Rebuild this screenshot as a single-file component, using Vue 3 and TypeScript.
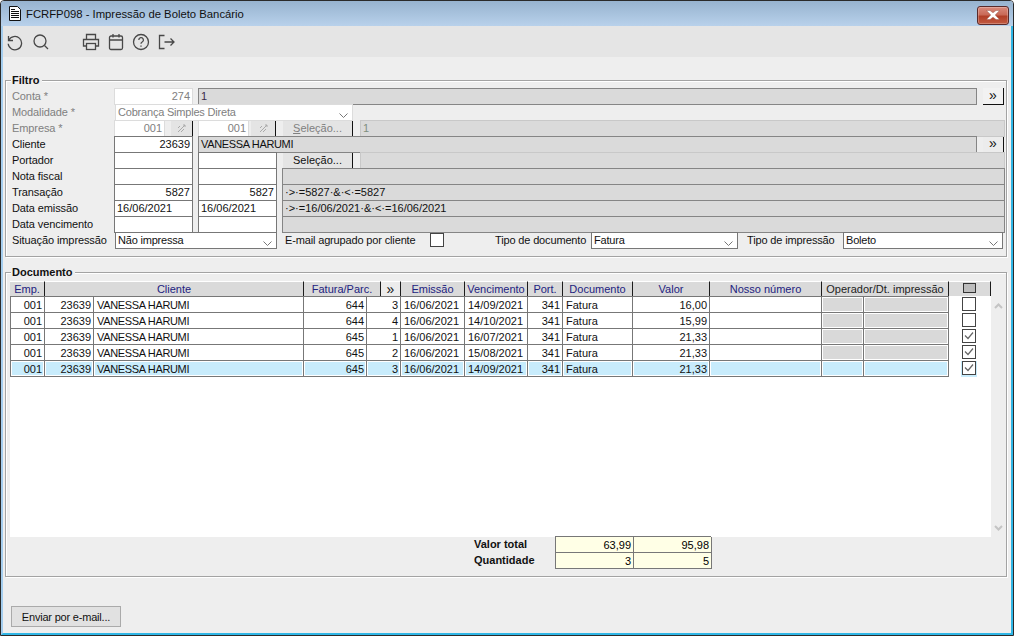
<script setup lang="ts">
interface Row {
  fat: string
  parc: string
  venc: string
  valor: string
  checked: boolean
  selected?: boolean
}

const rows: Row[] = [
  { fat: '644', parc: '3', venc: '14/09/2021', valor: '16,00', checked: false },
  { fat: '644', parc: '4', venc: '14/10/2021', valor: '15,99', checked: false },
  { fat: '645', parc: '1', venc: '16/07/2021', valor: '21,33', checked: true },
  { fat: '645', parc: '2', venc: '15/08/2021', valor: '21,33', checked: true },
  { fat: '645', parc: '3', venc: '14/09/2021', valor: '21,33', checked: true, selected: true },
]
</script>

<template>
  <div class="window">
    <header class="title">
      <svg class="title-icon" width="12" height="15" viewBox="0 0 12 15">
        <path d="M.5 .5h8l3 3v11h-11z" fill="#fff" stroke="#111" />
        <path d="M2 3.500h4M2 5.500h8M2 7.500h8M2 9.500h8M2 11.500h8" stroke="#111" stroke-width="1.200" />
      </svg>
      <span class="title-text">FCRFP098 - Impressão de Boleto Bancário</span>
      <button class="close" type="button" aria-label="Fechar">
        <svg width="14" height="10" viewBox="0 0 14 10">
          <path d="M.5 .5h3.500l3 2.300 3-2.300h3.500l-4.300 4.500 4.300 4.500h-3.500l-3-2.300-3 2.300h-3.500l4.300-4.500z" fill="#fff" stroke="#8a4a40" stroke-width=".4" />
        </svg>
      </button>
    </header>

    <div class="content">
      <nav class="toolbar">
        <svg class="tool" viewBox="0 0 18 18"><path d="M2.500 3v4.500h4.500M2.800 7.300a6.700 6.700 0 1 1-.6 3.500" /></svg>
        <svg class="tool" viewBox="0 0 18 18"><circle cx="8" cy="8" r="6" /><path d="M12.500 12.500l3.500 3.500" /></svg>
        <div class="tool-gap"></div>
        <svg class="tool" viewBox="0 0 18 18"><path d="M4.500 6V1.500h9V6M4.500 13H1.500V6.500h15V13h-3" /><rect x="4.500" y="10.500" width="9" height="6" /></svg>
        <svg class="tool" viewBox="0 0 18 18"><rect x="2.500" y="3" width="13" height="13.500" rx="1.500" /><path d="M2.500 7h13M6 1v3.500M12 1v3.500" /></svg>
        <svg class="tool" viewBox="0 0 18 18"><circle cx="9" cy="9" r="7.500" /><path d="M6.800 7a2.300 2.300 0 1 1 3.400 2c-.8.500-1.200.9-1.200 1.800" /><path d="M9 12.600v1.200" /></svg>
        <svg class="tool tool-last" viewBox="0 0 18 18"><path d="M6.500 2.500H1.500v13H6.500M6.500 9h9.500M12.500 5.500l3.500 3.500-3.500 3.500" /></svg>
      </nav>

      <main class="body">
        <section class="group filtro">
          <h2 class="legend">Filtro</h2>

          <div class="frow">
            <label class="lbl off">Conta *</label>
            <div class="f w79 r soft">274</div>
            <div class="f desc grow ml5">1</div>
            <button class="more" type="button">»</button>
          </div>
          <div class="frow">
            <label class="lbl off">Modalidade *</label>
            <div class="f sel soft modal">
              <span>Cobrança Simples Direta</span>
              <svg class="chev" width="9" height="5" viewBox="0 0 9 5"><path d="M.5.500l4 4 4-4" /></svg>
            </div>
          </div>
          <div class="frow">
            <label class="lbl off">Empresa *</label>
            <div class="f w51 r soft">001</div>
            <button class="lookup" type="button">
              <svg width="9" height="9" viewBox="0 0 9 9"><path d="M1 8l7-7M6 1h2M8 1v2M1 4l2-2M4 8l3-3" stroke="#aaa" fill="none" /></svg>
            </button>
            <div class="f w51 r soft ml5">001</div>
            <button class="lookup small" type="button">
              <svg width="9" height="9" viewBox="0 0 9 9"><path d="M1 8l7-7M6 1h2M8 1v2M1 4l2-2M4 8l3-3" stroke="#aaa" fill="none" /></svg>
            </button>
            <button class="sel-btn off ml7" type="button"><u>S</u>eleção...</button>
            <div class="f desc light grow ml7">1</div>
          </div>
          <div class="frow">
            <label class="lbl">Cliente</label>
            <div class="f w79 r">23639</div>
            <div class="f desc grow ml5 dark name">VANESSA HARUMI</div>
            <button class="more bare" type="button">»</button>
          </div>
          <div class="frow">
            <label class="lbl">Portador</label>
            <div class="f w79"></div>
            <div class="f w79 ml5"></div>
            <button class="sel-btn ml6" type="button">Seleção...</button>
            <div class="f desc light grow ml7"></div>
          </div>
          <div class="frow">
            <label class="lbl">Nota fiscal</label>
            <div class="f w79"></div>
            <div class="f w79 ml5"></div>
            <div class="f desc grow ml5"></div>
          </div>
          <div class="frow">
            <label class="lbl">Transação</label>
            <div class="f w79 r">5827</div>
            <div class="f w79 r ml5">5827</div>
            <div class="f desc grow ml5 dark">·&gt;·=5827·&amp;·&lt;·=5827</div>
          </div>
          <div class="frow">
            <label class="lbl">Data emissão</label>
            <div class="f w79">16/06/2021</div>
            <div class="f w79 ml5">16/06/2021</div>
            <div class="f desc grow ml5 dark">·&gt;·=16/06/2021·&amp;·&lt;·=16/06/2021</div>
          </div>
          <div class="frow">
            <label class="lbl">Data vencimento</label>
            <div class="f w79"></div>
            <div class="f w79 ml5"></div>
            <div class="f desc grow ml5"></div>
          </div>
          <div class="frow">
            <label class="lbl">Situação impressão</label>
            <div class="f sel situacao">
              <span>Não impressa</span>
              <svg class="chev" width="9" height="5" viewBox="0 0 9 5"><path d="M.5.500l4 4 4-4" /></svg>
            </div>
            <span class="inline email">E-mail agrupado por cliente</span>
            <span class="box email-box"></span>
            <span class="inline tipo-doc">Tipo de documento</span>
            <div class="f sel w147">
              <span>Fatura</span>
              <svg class="chev" width="9" height="5" viewBox="0 0 9 5"><path d="M.5.500l4 4 4-4" /></svg>
            </div>
            <span class="inline tipo-imp">Tipo de impressão</span>
            <div class="f sel w160">
              <span>Boleto</span>
              <svg class="chev" width="9" height="5" viewBox="0 0 9 5"><path d="M.5.500l4 4 4-4" /></svg>
            </div>
          </div>
        </section>

        <section class="group documento">
          <h2 class="legend">Documento</h2>

          <div class="grid-wrap">
            <div class="grid">
              <div class="thead">
                <span class="th" style="width: 35px">Emp.</span>
                <span class="th" style="width: 259px">Cliente</span>
                <span class="th" style="width: 77px">Fatura/Parc.</span>
                <span class="th more-th" style="width: 20px">»</span>
                <span class="th" style="width: 64px">Emissão</span>
                <span class="th" style="width: 63px">Vencimento</span>
                <span class="th" style="width: 35px">Port.</span>
                <span class="th" style="width: 70px">Documento</span>
                <span class="th" style="width: 77px">Valor</span>
                <span class="th" style="width: 112px">Nosso número</span>
                <span class="th op" style="width: 127px">Operador/Dt. impressão</span>
                <span class="th" style="width: 42px"><i class="all-box"></i></span>
              </div>
              <div v-for="(row, i) in rows" :key="i" class="tr" :class="{ selected: row.selected }">
                <div class="cells">
                  <span class="td r" style="width: 34px">001</span>
                  <span class="td r" style="width: 49px">23639</span>
                  <span class="td name" style="width: 210px">VANESSA HARUMI</span>
                  <span class="td r" style="width: 63px">{{ row.fat }}</span>
                  <span class="td r" style="width: 34px">{{ row.parc }}</span>
                  <span class="td" style="width: 64px">16/06/2021</span>
                  <span class="td" style="width: 63px">{{ row.venc }}</span>
                  <span class="td r" style="width: 35px">341</span>
                  <span class="td" style="width: 70px">Fatura</span>
                  <span class="td r" style="width: 77px">{{ row.valor }}</span>
                  <span class="td" style="width: 112px"></span>
                  <span class="td ro" style="width: 42px"></span>
                  <span class="td ro" style="width: 85px"></span>
                </div>
                <span class="box row-box" :class="{ tinted: row.selected }">
                  <svg v-if="row.checked" width="12" height="12" viewBox="0 0 12 12"><path d="M2 5.500l3 3 5-6" fill="none" stroke="#666" stroke-width="1.200" /></svg>
                </span>
              </div>
            </div>
            <div class="scroll">
              <svg width="9" height="6" viewBox="0 0 9 6"><path d="M1 5l3.500-3.500L8 5" /></svg>
              <svg width="9" height="6" viewBox="0 0 9 6"><path d="M1 1l3.500 3.500L8 1" /></svg>
            </div>
          </div>

          <div class="totals">
            <div class="total-labels">
              <b>Valor total</b>
              <b>Quantidade</b>
            </div>
            <div class="total-grid">
              <span>63,99</span>
              <span>95,98</span>
              <span>3</span>
              <span>5</span>
            </div>
          </div>
        </section>

        <button class="send" type="button">Enviar por e-mail...</button>
      </main>
    </div>
  </div>
</template>

<style>
html,
body {
  margin: 0;
  overflow: hidden;
}
</style>

<style scoped>
* {
  box-sizing: border-box;
}
.window {
  width: 1014px;
  height: 636px;
  display: flex;
  flex-direction: column;
  border: 1px solid #2a2a2a;
  border-radius: 4px 4px 0 0;
  background: #eee;
  font: 11px/14px "Liberation Sans", Arial, sans-serif;
  color: #111;
  overflow: hidden;
}
.title {
  height: 25px;
  flex: none;
  display: flex;
  align-items: center;
  padding-left: 8px;
  background: linear-gradient(#97b3cf, #b8d1eb);
}
.title-icon {
  margin-right: 5px;
  flex: none;
}
.title-text {
  font-size: 11.300px;
  color: #111;
}
.close {
  margin-left: auto;
  margin-right: 4px;
  width: 32px;
  height: 19px;
  margin-top: 3px;
  padding: 0;
  display: flex;
  align-items: center;
  justify-content: center;
  border: 1px solid #5a2a2a;
  border-radius: 3px;
  background: linear-gradient(#d98a7c, #c96a58 45%, #b13f28 55%, #c25a40);
  box-shadow: inset 0 0 0 1px rgba(255, 255, 255, 0.25);
}
.content {
  flex: 1;
  min-height: 0;
  display: flex;
  flex-direction: column;
  border-left: 2px solid #a4cdee;
  border-right: 2px solid #2fb6e6;
  border-bottom: 2px solid #2fb6e6;
}
.toolbar {
  height: 31px;
  flex: none;
  display: flex;
  align-items: center;
  gap: 7px;
  padding-left: 3px;
  background: #e5e5e5;
}
.tool {
  width: 18px;
  height: 18px;
  flex: none;
  fill: none;
  stroke: #484848;
  stroke-width: 1.300;
}
.tool:nth-child(2) {
  margin-left: 1px;
}
.tool-gap {
  width: 18px;
  flex: none;
}
.tool-last {
  margin-left: 1px;
}
.body {
  flex: 1;
  min-height: 0;
  display: flex;
  flex-direction: column;
  padding: 23px 4px 0 2px;
}
.group {
  position: relative;
  flex: none;
  border: 1px solid #a3a3a3;
  box-shadow: 1px 1px 0 #fff, inset 1px 1px 0 #fff;
}
.legend {
  position: absolute;
  left: 5px;
  top: -8px;
  margin: 0;
  padding: 0 2px 0 1px;
  background: #eee;
  font-size: 11px;
  line-height: 14px;
  font-weight: 700;
  color: #111;
}
.filtro {
  height: 177px;
  padding: 7px 1px 7px 6px;
}
.frow {
  height: 16px;
  display: flex;
  align-items: flex-start;
}
.lbl {
  width: 102px;
  flex: none;
  line-height: 17px;
  letter-spacing: -0.1px;
}
.off {
  color: #808080;
}
.f {
  height: 17px;
  flex: none;
  padding: 0 2px;
  border: 1px solid #777;
  background: #fff;
  line-height: 14px;
  white-space: nowrap;
  overflow: hidden;
  position: relative;
}
.r {
  text-align: right;
}
.soft {
  border-color: #dcdcdc;
  color: #808080;
}
.w79 {
  width: 79px;
}
.w51 {
  width: 51px;
}
.w147 {
  width: 147px;
}
.w160 {
  width: 160px;
}
.grow {
  flex: 1;
  min-width: 0;
}
.ml5 {
  margin-left: 5px;
}
.ml6 {
  margin-left: 6px;
}
.ml7 {
  margin-left: 7px;
}
.desc {
  background: #dadada;
  border-color: #858585;
  color: #3a2a4a;
}
.desc.dark {
  color: #111;
}
.desc.light {
  border-color: #c8c8c8;
  color: #7f8f7f;
}
.name {
  letter-spacing: -0.35px;
}
.sel {
  display: flex;
  align-items: flex-start;
  justify-content: space-between;
  padding-right: 4px;
  letter-spacing: -0.2px;
}
.modal {
  width: 238px;
  margin-left: 1px;
}
.situacao {
  width: 162px;
  margin-left: 1px;
  border-color: #777;
}
.chev {
  fill: none;
  stroke: #777;
  flex: none;
  margin-top: 8px;
}
.more {
  width: 21px;
  height: 17px;
  flex: none;
  margin: 0 1px 0 6px;
  padding: 0 0 2px;
  border: 0;
  border-right: 1px solid #111;
  border-bottom: 1px solid #111;
  background: #f2f2f2;
  font: 14px/14px "Liberation Sans", Arial, sans-serif;
  color: #111;
}
.more.bare {
  height: 16px;
  border-bottom: 0;
  background: #ececec;
}
.lookup {
  width: 22px;
  height: 16px;
  flex: none;
  margin-left: 6px;
  padding: 0;
  border: 0;
  border-right: 1px solid #111;
  background: #e4e4e4;
  display: flex;
  align-items: center;
  justify-content: center;
}
.lookup.small {
  width: 25px;
  margin-left: 2px;
}
.sel-btn {
  width: 70px;
  height: 17px;
  flex: none;
  padding: 0;
  border: 0;
  border-right: 1px solid #111;
  border-bottom: 1px solid #8c8c8c;
  background: #e4e4e4;
  font: 11px/15px "Liberation Sans", Arial, sans-serif;
  color: #111;
}
.sel-btn.off {
  color: #808080;
}
.inline {
  line-height: 17px;
  flex: none;
  white-space: nowrap;
  letter-spacing: -0.15px;
}
.box {
  display: flex;
  align-items: center;
  justify-content: center;
  width: 14px;
  height: 14px;
  flex: none;
  border: 1px solid #444;
  background: #fff;
}
.email {
  margin-left: 8px;
  width: 145px;
}
.email-box {
  margin-top: 1px;
}
.tipo-doc {
  margin-left: 51px;
  width: 96px;
}
.tipo-imp {
  margin-left: 9px;
  width: 96px;
}
.documento {
  height: 305px;
  margin-top: 15px;
  padding: 8px 0 0 4px;
}
.grid-wrap {
  height: 256px;
  display: flex;
}
.grid {
  width: 981px;
  height: 100%;
  background: #fff;
}
.thead {
  height: 15px;
  display: flex;
  background: #eee;
}
.th {
  flex: none;
  height: 15px;
  border-right: 1px solid #1c1c1c;
  border-top: 1px solid #fff;
  background: #dadada;
  color: #22227f;
  text-align: center;
  line-height: 14px;
  white-space: nowrap;
  overflow: hidden;
}
.th.op {
  color: #222;
}
.th.more-th {
  font-size: 14px;
  color: #111;
  background: #ececec;
}
.all-box {
  display: inline-block;
  width: 13px;
  height: 10px;
  margin-top: 1px;
  border: 1px solid #333;
  background: #bdbdbd;
}
.tr {
  height: 16px;
  display: flex;
  align-items: flex-start;
}
.tr:first-of-type .td {
  border-top: 1px solid #555;
}
.cells {
  width: 939px;
  flex: none;
  height: 17px;
  display: flex;
  border-left: 1px solid #777;
}
.td {
  flex: none;
  height: 17px;
  padding: 0 2px 0 3px;
  border-top: 1px solid #777;
  border-bottom: 1px solid #777;
  border-right: 1px solid #777;
  line-height: 17px;
  white-space: nowrap;
  overflow: hidden;
}
.td.r {
  text-align: right;
}
.td.ro {
  background: #d9d9d9;
  box-shadow: inset 1px 1px 0 #fff, inset -1px -1px 0 #fff;
}
.selected .td {
  background: #c8ecfc;
  box-shadow: inset 1px 1px 0 #fff, inset -1px -1px 0 #fff;
}
.row-box {
  margin: 1px 0 0 13px;
  width: 14px;
}
.row-box.tinted {
  box-shadow: 0 1px 0 1px #c8ecfc;
}
.scroll {
  width: 14px;
  flex: none;
  padding: 22px 0 6px;
  display: flex;
  flex-direction: column;
  justify-content: space-between;
  align-items: center;
}
.scroll svg {
  fill: none;
  stroke: #c4c4c4;
  stroke-width: 2;
}
.totals {
  display: flex;
  margin-top: -1px;
  padding-left: 464px;
}
.total-labels {
  width: 81px;
  display: flex;
  flex-direction: column;
  padding-top: 1px;
}
.total-labels b {
  height: 16px;
  line-height: 15px;
}
.total-grid {
  display: grid;
  grid-template-columns: 78px 78px;
  grid-auto-rows: 16px;
  width: 156px;
  border-top: 1px solid #777;
  border-left: 1px solid #777;
}
.total-grid span {
  height: 16px;
  padding-right: 2px;
  border-right: 1px solid #777;
  border-bottom: 1px solid #777;
  background: #ffffe6;
  text-align: right;
  line-height: 16px;
  color: #000;
}
.send {
  width: 110px;
  height: 21px;
  flex: none;
  margin: 29px 0 0 6px;
  padding: 0;
  border: 1px solid #aaa;
  background: #e1e1e1;
  font: 11px/18px "Liberation Sans", Arial, sans-serif;
  letter-spacing: -0.2px;
  color: #111;
}
</style>
